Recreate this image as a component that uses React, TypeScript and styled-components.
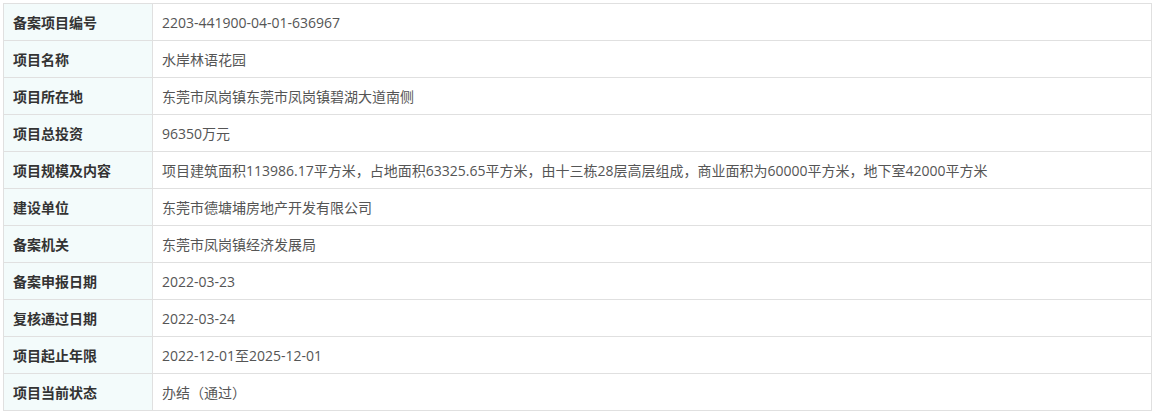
import React from "react";
import styled, { createGlobalStyle } from "styled-components";

const Global = createGlobalStyle`
  html, body { margin: 0; padding: 0; background: #fff; }
  body { font-family: "Open Sans", "Noto Sans CJK SC", sans-serif; }
`;

const Wrap = styled.div`
  padding: 3px 0 0 3px;
  width: 1149px;
`;

const Table = styled.table`
  width: 1149px;
  border-collapse: collapse;
  table-layout: fixed;
  border: 1px solid #e0e0e0;
`;

const Row = styled.tr`
  height: 37px;
`;

const Label = styled.th`
  width: 149px;
  box-sizing: border-box;
  background: #f3fbfb;
  border: 1px solid #e0e0e0;
  padding: 0 0 0 9px;
  text-align: left;
  font-size: 14px;
  font-weight: bold;
  color: #333;
  white-space: nowrap;
`;

const Value = styled.td`
  border: 1px solid #e0e0e0;
  padding: 0 0 0 9px;
  font-size: 14px;
  color: #555;
  white-space: nowrap;
`;

const rows: [string, string][] = [
  ["备案项目编号", "2203-441900-04-01-636967"],
  ["项目名称", "水岸林语花园"],
  ["项目所在地", "东莞市凤岗镇东莞市凤岗镇碧湖大道南侧"],
  ["项目总投资", "96350万元"],
  [
    "项目规模及内容",
    "项目建筑面积113986.17平方米，占地面积63325.65平方米，由十三栋28层高层组成，商业面积为60000平方米，地下室42000平方米",
  ],
  ["建设单位", "东莞市德塘埔房地产开发有限公司"],
  ["备案机关", "东莞市凤岗镇经济发展局"],
  ["备案申报日期", "2022-03-23"],
  ["复核通过日期", "2022-03-24"],
  ["项目起止年限", "2022-12-01至2025-12-01"],
  ["项目当前状态", "办结（通过）"],
];

export default function App() {
  return (
    <>
      <Global />
      <Wrap>
        <Table>
          <tbody>
            {rows.map(([k, v]) => (
              <Row key={k}>
                <Label>{k}</Label>
                <Value>{v}</Value>
              </Row>
            ))}
          </tbody>
        </Table>
      </Wrap>
    </>
  );
}
